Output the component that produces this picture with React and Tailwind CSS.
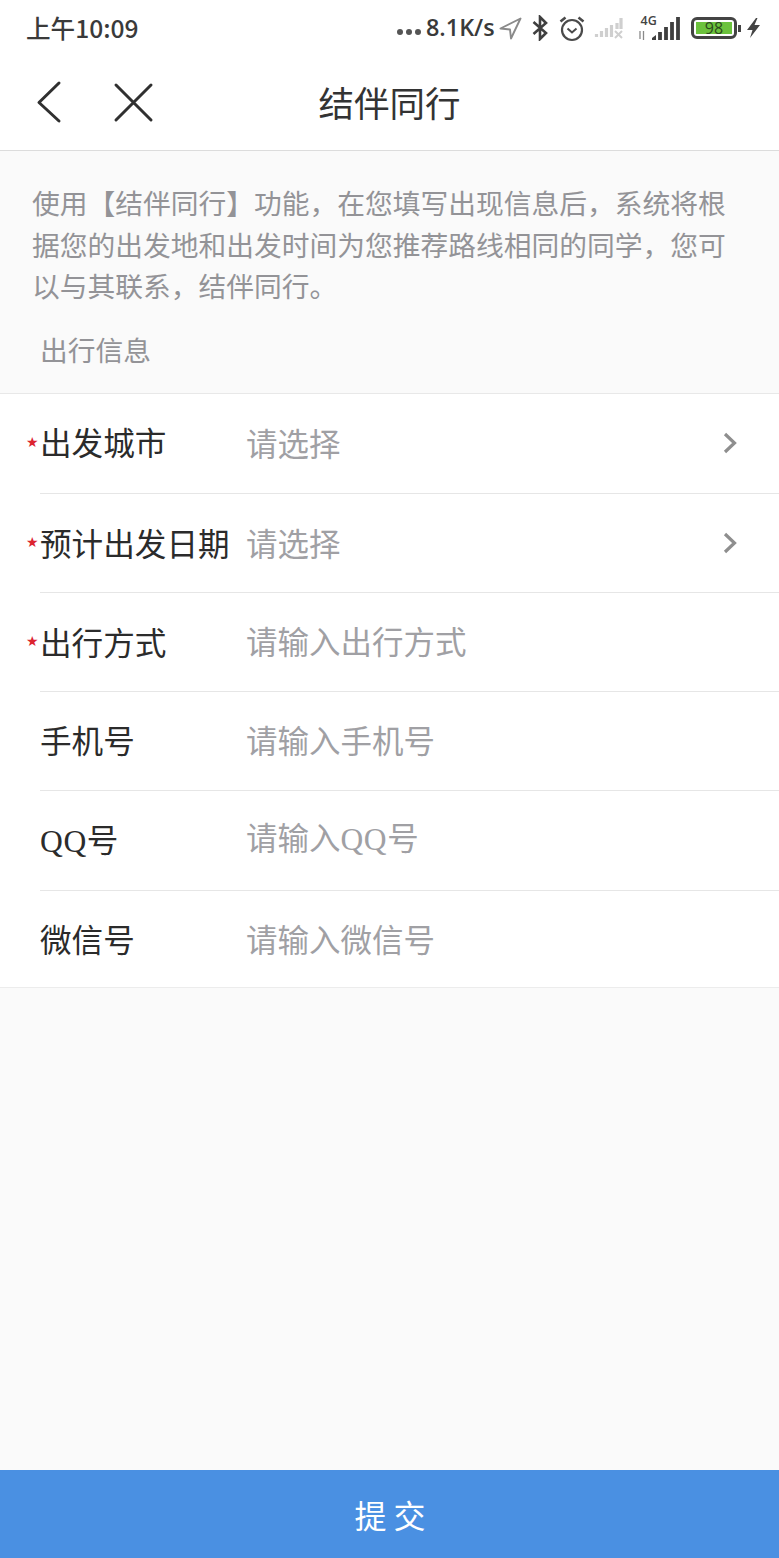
const CJK = '"Noto Sans CJK SC", sans-serif';

function Q() {
  return <span className="tracking-[0.6px]" style={{ fontFamily: '"Liberation Serif", serif' }}>QQ</span>;
}

function Row({ label, required, placeholder, arrow, border = true, height = 'h-[99px]', labelShift = 'pb-[6px]', phShift = 'pb-[6px]' }) {
  return (
    <div className={`relative flex items-center bg-white pl-[40px] ${height}`}>
      {required && (
        <span className="absolute left-[26px] top-[41px] text-[14px] leading-[14px] text-[#dc2430]" style={{ fontFamily: '"DejaVu Sans", sans-serif' }}>★</span>
      )}
      <span className={`w-[207px] shrink-0 whitespace-nowrap text-[31.6px] leading-[40px] text-[#2b2b2b] ${labelShift}`}>{label}</span>
      <span className={`-ml-px flex-1 whitespace-nowrap text-[31.5px] leading-[40px] text-[#a0a0a4] ${phShift}`}>{placeholder}</span>
      {arrow && (
        <svg className="mr-[41px] mb-[2px]" width="16" height="22" viewBox="0 0 16 22" fill="none">
          <path d="M3 2 L12.5 11 L3 20" stroke="#8e8e8e" strokeWidth="3.2" />
        </svg>
      )}
      {border && <div className="absolute bottom-0 left-[40px] right-0 h-px bg-[#e6e6e6]" />}
    </div>
  );
}

function StatusIcons() {
  return (
    <div className="flex items-center text-[#3a3a3a]">
      <span className="flex items-center gap-[3px] pt-[8px]">
        <i className="block h-[6px] w-[6px] rounded-full bg-[#555]" />
        <i className="block h-[6px] w-[6px] rounded-full bg-[#555]" />
        <i className="block h-[6px] w-[6px] rounded-full bg-[#555]" />
      </span>
      <span className="ml-[5px] w-[68px] whitespace-nowrap text-[23.4px] font-semibold leading-none" style={{ fontFamily: '"Open Sans", sans-serif' }}>8.1K/s</span>
      <svg className="ml-[5px]" width="23" height="24" viewBox="0 0 23 24" fill="none">
        <path d="M21.5 2.5 L1.5 12.5 L11 13.5 L12 22.5 Z" stroke="#8a8a8a" strokeWidth="1.9" strokeLinejoin="round" />
      </svg>
      <svg className="ml-[9px]" width="18" height="26" viewBox="0 0 18 26" fill="none">
        <path d="M2.5 7 L15 18 L9 24 V2 L15 8 L2.5 19" stroke="#3f3f3f" strokeWidth="2.6" />
      </svg>
      <svg className="ml-[10px]" width="26" height="27" viewBox="0 0 26 27" fill="none">
        <circle cx="13" cy="15" r="10" stroke="#4a4a4a" strokeWidth="2.2" />
        <path d="M8.5 13.5 L13 17.5 L17.5 13.5" stroke="#4a4a4a" strokeWidth="2" />
        <path d="M1.5 6.5 L6.5 2.5 M24.5 6.5 L19.5 2.5" stroke="#4a4a4a" strokeWidth="2.6" />
      </svg>
      <svg className="ml-[9px]" width="30" height="24" viewBox="0 0 30 24" fill="none">
        <path d="M2.5 21 v-3 M7.5 21 v-6 M12.5 21 v-9 M17.5 21 v-12" stroke="#cfcfcf" strokeWidth="3.2" />
        <path d="M23 13 v-6 M27 13 v-11" stroke="#cfcfcf" strokeWidth="3.2" />
        <path d="M21 15 L28 22 M28 15 L21 22" stroke="#cfcfcf" strokeWidth="2" />
      </svg>
      <svg className="ml-[14px] overflow-visible" width="42" height="26" viewBox="0 0 42 26" fill="none">
        <text x="2.5" y="10" fontSize="12.5" fontWeight="600" fill="#444" fontFamily="Open Sans, sans-serif">4G</text>
        <path d="M2 24 v-8 M5.5 25 v-9" stroke="#8a8a8a" strokeWidth="1.3" />
        <path d="M14 25 v-2 L18 20 v5 Z" fill="#3f3f3f" />
        <path d="M22 25 v-8 M28 25 v-13 M34 25 v-18 M40 25 v-23" stroke="#3f3f3f" strokeWidth="3.8" />
      </svg>
      <div className="ml-[11px] flex h-[22px] w-[46px] items-center rounded-[6px] border-[3px] border-[#444] p-[2px]">
        <div className="flex h-full flex-1 items-center justify-center bg-[#6cc23d] text-[16px] leading-none text-[#2c4a1c]" style={{ fontFamily: '"Open Sans", sans-serif' }}>98</div>
      </div>
      <div className="ml-[1px] h-[7px] w-[3px] bg-[#444]" />
      <svg className="ml-[5px]" width="15" height="22" viewBox="0 0 15 22" fill="#444">
        <path d="M10 1 L1 13 H6.5 L4 21 L14 8 H8.5 L11.5 1 Z" />
      </svg>
    </div>
  );
}

export default function App() {
  return (
    <div className="flex h-[1558px] w-[779px] flex-col overflow-hidden bg-[#fafafa]" style={{ fontFamily: CJK }}>
      <div className="flex h-[56px] shrink-0 items-center justify-between bg-white pl-[26px] pr-[18px]">
        <span className="pb-[2px] text-[24.6px] font-medium leading-none text-[#3a3a3a]">上午10:09</span>
        <StatusIcons />
      </div>
      <div className="relative flex h-[95px] shrink-0 items-center justify-center border-b border-[#dcdcdc] bg-white">
        <svg className="absolute left-[36px] top-[24px]" width="26" height="44" viewBox="0 0 26 44" fill="none">
          <path d="M23 3 L3 22.5 L23 41" stroke="#303030" strokeWidth="3" strokeLinecap="round" strokeLinejoin="round" />
        </svg>
        <svg className="absolute left-[112px] top-[26px]" width="42" height="42" viewBox="0 0 42 42" fill="none">
          <path d="M4 3 L39 38 M39 3 L4 38" stroke="#303030" strokeWidth="3" strokeLinecap="round" />
        </svg>
        <span className="pb-[2px] text-[35.5px] leading-none text-[#333]">结伴同行</span>
      </div>
      <div className="h-[243px] shrink-0 border-b border-[#e8e8e8] px-[32px] pt-[31px]">
        <p className="w-[720px] text-[27.76px] leading-[41.5px] text-[#939397]">使用【结伴同行】功能，在您填写出现信息后，系统将根据您的出发地和出发时间为您推荐路线相同的同学，您可以与其联系，结伴同行。</p>
        <p className="mt-[22px] pl-[8px] text-[27.76px] leading-[40px] text-[#939397]">出行信息</p>
      </div>
      <div className="shrink-0 border-b border-[#ececec]">
        <Row required label="出发城市" placeholder="请选择" arrow height="h-[100px]" labelShift="pb-[7px]" phShift="pb-[5px]" />
        <Row required label="预计出发日期" placeholder="请选择" arrow labelShift="pb-[4px]" phShift="pb-[4px]" />
        <Row required label="出行方式" placeholder="请输入出行方式" labelShift="pb-[4px]" />
        <Row label="手机号" placeholder="请输入手机号" />
        <Row label={<><Q />号</>} placeholder={<>请输入<Q />号</>} height="h-[100px]" labelShift="pb-[2px]" />
        <Row label="微信号" placeholder="请输入微信号" border={false} height="h-[96px]" labelShift="pb-[2px]" phShift="pb-[2px]" />
      </div>
      <div className="flex-1" />
      <div className="flex h-[88px] shrink-0 items-center justify-center bg-[#4a90e2] pl-[8px] text-[32px] leading-none tracking-[7px] text-white">提交</div>
    </div>
  );
}
